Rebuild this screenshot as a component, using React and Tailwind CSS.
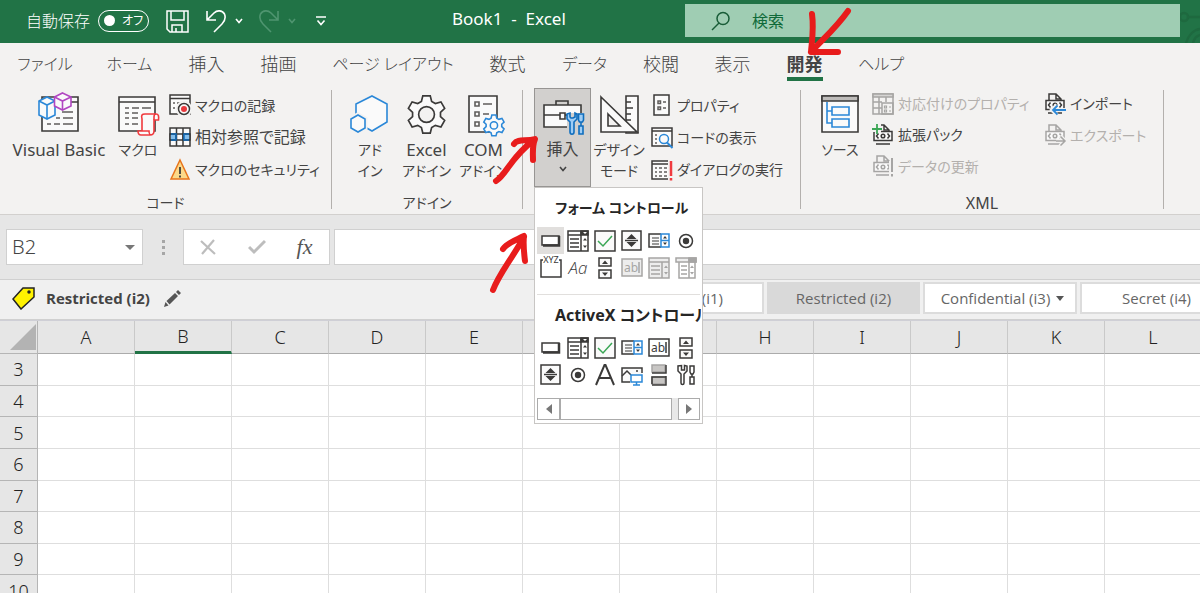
import React, { useState } from 'react';

const INK = '#3b3a39';
const BLUE = '#2b88d8';
const GREY = '#a6a5a4';
const PAPER = '#fafafa';

const tabs = [
  { name: 'ファイル', style: 'w-[86px] text-[16px]' },
  { name: 'ホーム', style: 'w-[83px] text-[16px]' },
  { name: '挿入', style: 'w-[71px] text-[18px]' },
  { name: '描画', style: 'w-[73px] text-[18px]' },
  { name: 'ページ レイアウト', style: 'w-[156px] text-[16px]' },
  { name: '数式', style: 'w-[73px] text-[18px]' },
  { name: 'データ', style: 'w-[81px] text-[16px]' },
  { name: '校閲', style: 'w-[72px] text-[18px]' },
  { name: '表示', style: 'w-[71px] text-[18px]' },
  { name: '開発', style: 'w-[73px] text-[18px]' },
  { name: 'ヘルプ', style: 'w-[80px] text-[16px]' },
];

const columns = ['A', 'B', 'C', 'D', 'E', 'F', 'G', 'H', 'I', 'J', 'K', 'L'];
const rows = [3, 4, 5, 6, 7, 8, 9, 10];

const Big = ({ children }) => (
  <svg className="h-[42px] w-[42px] overflow-visible" viewBox="0 0 42 42" fill="none" stroke={INK} strokeWidth="1.6">
    {children}
  </svg>
);

const Small = ({ children, color = INK }) => (
  <svg className="h-[22px] w-[22px] shrink-0 overflow-visible" viewBox="0 0 22 22" fill="none" stroke={color} strokeWidth="1.5">
    {children}
  </svg>
);

/* ---------- large ribbon icons ---------- */

const VisualBasicIcon = () => (
  <Big>
    <path d="M4 3H40V37H4Z" fill={PAPER} />
    <path d="M4 8H40" />
    <path d="M24 18h11M18 24h4M25 24h10M9 30h4M16 30h6M25 30h10" stroke="#605e5c" />
    <path d="M9 3 17 7V21L9 25 1 21V7Z" fill={PAPER} stroke={BLUE} />
    <path d="M1 7 9 11 17 7M9 11V25" stroke={BLUE} />
    <path d="M24.500-1 33 3V12L24.500 16 16.500 12V3Z" fill={PAPER} stroke="#b146c2" />
    <path d="M16.500 3 24.500 7 33 3M24.500 7V16" stroke="#b146c2" />
  </Big>
);

const MacroIcon = () => (
  <Big>
    <path d="M2 3H38V37H2Z" fill={PAPER} />
    <path d="M2 8H38" />
    <path d="M8 14h4M15 14h7M25 14h9M8 19h4M15 19h6M8 24h4M15 24h6M8 30h4M15 30h6" stroke="#605e5c" />
    <path d="M25 37V25C24 21 25 20 28 20H39C41.500 20 42 22 41.500 26H37V37C37 40 36 41 33 41H24C21 41 21 39 21 37H32C32 39 33 41 34 41" fill={PAPER} stroke="#f03a3e" />
    <path d="M37 26V23C37 21 38 20 39 20" stroke="#f03a3e" />
  </Big>
);

const AddInIcon = () => (
  <Big>
    <path d="M23 2 38 10V28L23 37 7 28V10Z" fill={PAPER} stroke={BLUE} />
    <path d="M9 21 16 25V34L9 38 2 34V25Z" fill={PAPER} stroke="#f3f2f1" strokeWidth="5" />
    <path d="M9 21 16 25V34L9 38 2 34V25Z" fill={PAPER} stroke={BLUE} />
  </Big>
);

const gearPath = 'M17 2h8l1.500 6 4 2.300 6-1.800 4 7-4.500 4.200v4.600l4.500 4.200-4 7-6-1.800-4 2.300-1.500 6h-8l-1.500-6-4-2.300-6 1.800-4-7 4.500-4.200v-4.600L1.500 15.500l4-7 6 1.800 4-2.300Z';

const GearIcon = () => (
  <Big>
    <g transform="translate(1 0) scale(.93)">
      <path d={gearPath} fill={PAPER} strokeWidth="1.800" />
      <circle cx="21" cy="22" r="8.500" fill="#f3f2f1" strokeWidth="1.800" />
    </g>
  </Big>
);

const ComAddInIcon = () => (
  <Big>
    <path d="M6 2H34V38H6Z" fill={PAPER} />
    <path d="M12 8h4v4h-4ZM12 18h4v4h-4ZM12 28h4v4h-4ZM20 10h9M20 20h6" stroke="#605e5c" />
    <g transform="translate(20 20) scale(.52)">
      <path d={gearPath} fill={PAPER} stroke={BLUE} strokeWidth="3" />
      <circle cx="21" cy="22" r="7" fill={PAPER} stroke={BLUE} strokeWidth="3" />
    </g>
  </Big>
);

const ToolboxIcon = () => (
  <Big>
    <path d="M14 11V7H26V11" />
    <path d="M2 11H39V33H2Z" fill={PAPER} />
    <path d="M2 21H18M23 21H39M18 19h5v6h-5Z" />
    <path d="M25 19h17v22H25Z" fill="#d2d0ce" stroke="none" />
    <path d="M25 20v5l3 3v10c0 3 4 3 4 0V28l3-3v-5l-2-1v4l-2 1h-2l-1-1v-4Z" fill="#9fcdf5" stroke="#106ebe" />
    <path d="M36.500 20h5v6l-1 2h-3l-1-2ZM39 28v4M37 32h4v8h-4Z" fill="#9fcdf5" stroke="#106ebe" />
  </Big>
);

const DesignModeIcon = () => (
  <Big>
    <path d="M28 2H40V39H28Z" fill={PAPER} />
    <path d="M28 8h5M28 14h7M28 20h5M28 26h5M28 32h5" />
    <path d="M3 3 39 38H3Z" fill={PAPER} />
    <path d="M10 20 22 32H10Z" fill="#f3f2f1" />
  </Big>
);

const SourceIcon = () => (
  <Big>
    <path d="M3 2H39V38H3Z" fill={PAPER} />
    <path d="M3 2H39V7H3Z" fill="#bebcba" />
    <path d="M8 8V29H13M8 17H13M13 13H30V21H13ZM13 25H30V33H13Z" stroke={BLUE} />
  </Big>
);

/* ---------- small ribbon icons ---------- */

const RecordIcon = () => (
  <Small>
    <path d="M1 1H21V20H1Z" fill={PAPER} />
    <path d="M1 4.500H21" />
    <path d="M4 9h2M8 9h4M4 14h2" stroke="#605e5c" />
    <circle cx="15" cy="15" r="7.500" fill={PAPER} stroke="#f3f2f1" />
    <circle cx="15" cy="15" r="5.500" fill={PAPER} />
    <circle cx="15" cy="15" r="3" fill="#e8383d" stroke="none" />
  </Small>
);

const RelativeIcon = () => (
  <Small>
    <path d="M1 2H21V20H1Z" fill={PAPER} />
    <path d="M1 8h6v6H1ZM14 8h7v6h-7Z" fill="#83beec" />
    <path d="M1 8H21M1 14H21M7.500 2V20M14 2V20" />
    <path d="M2 8H7v6H2M20 8H15v6h5" stroke="#106ebe" />
  </Small>
);

const SecurityIcon = () => (
  <Small>
    <path d="M11 1 20 20H2Z" fill="#fbd98a" stroke="#e8741b" />
    <path d="M11 8v7M11 16.500v2" stroke={INK} strokeWidth="1.800" />
  </Small>
);

const PropertyIcon = () => (
  <Small>
    <path d="M3 1H18V21H3Z" fill={PAPER} />
    <path d="M7 7h2.500v2.500H7ZM7 13h2.500v2.500H7ZM12 8h3M12 14h3" stroke="#605e5c" />
  </Small>
);

const ViewCodeIcon = () => (
  <Small>
    <path d="M1 2H21V20H1Z" fill={PAPER} />
    <path d="M1 5H21" />
    <path d="M4 9h2M4 13h2M4 17h2" stroke="#605e5c" />
    <circle cx="13" cy="13" r="4.500" fill={PAPER} stroke={BLUE} />
    <path d="M16 16.500 21.500 22" stroke={BLUE} strokeWidth="2" />
  </Small>
);

const RunDialogIcon = () => (
  <Small>
    <path d="M17 2H1V20H17" fill={PAPER} />
    <path d="M1 5H17" />
    <path d="M4 9h2M8 9h3M13 9h3M4 13h2M8 13h3M13 13h3M4 17h2M8 17h3M13 17h3" stroke="#605e5c" />
    <path d="M20 2V17M20 19V21.500" stroke="#f03a3e" strokeWidth="2.500" />
  </Small>
);

const MapPropertyIcon = () => (
  <Small color={GREY}>
    <path d="M1 1H21V21H1Z" fill="#f3f2f1" />
    <path d="M1 1H21V4H1Z" fill="#d5d4d3" />
    <path d="M1 9h9M1 15h9M7 4V21M14 4V9M10 10H21V21H10Z" />
    <path d="M12.500 13h2v2h-2ZM12.500 17h2v2h-2ZM17 14h2M17 18h2" strokeWidth="1.200" />
  </Small>
);

// shared <o> document used by the four XML commands
const XmlBody = () => (
  <>
    <path d="M5 7V1H12L17 6V7M12 1V6H17" />
    <path d="M20 16.500V7.500H2V16.500Z" fill={PAPER} />
    <path d="M6.500 9.500 4.500 12 6.500 14.500M15.500 9.500 17.500 12 15.500 14.500" />
    <circle cx="11" cy="12" r="1.800" />
    <path d="M4 20H18" />
  </>
);

const ExpansionIcon = () => (
  <Small>
    <XmlBody />
    <path d="M0-1H9V9H3V8H0Z" fill="#f3f2f1" stroke="none" />
    <path d="M5 0V10M0 5H10" stroke="#3aa655" strokeWidth="1.800" />
  </Small>
);

const RefreshIcon = () => (
  <Small color={GREY}>
    <XmlBody />
    <path d="M17 6h6v16h-6Z" fill="#f3f2f1" stroke="none" />
    <path d="M20 3V17M20 19V21.500" strokeWidth="2" />
  </Small>
);

const ImportIcon = () => (
  <Small>
    <XmlBody />
    <path d="M8 17H22M13 12 8 17 13 22" stroke="#f3f2f1" strokeWidth="4" />
    <path d="M9 17H22M13.500 12.500 9 17 13.500 21.500" stroke={BLUE} strokeWidth="1.800" />
  </Small>
);

const ExportIcon = () => (
  <Small color={GREY}>
    <XmlBody />
    <path d="M12 17H21M16 12 21 17 16 22" stroke="#f3f2f1" strokeWidth="4" />
    <path d="M12 17H21M16.500 12.500 21 17 16.500 21.500" />
  </Small>
);

/* ---------- form control icons ---------- */

const ButtonCtl = () => (
  <Small>
    <path d="M2 6H19V15H2Z" fill="#fff" />
    <path d="M19 6V15.500H3" strokeWidth="2.500" />
  </Small>
);

const ComboCtl = () => (
  <Small>
    <path d="M1 1H21V21H1Z" fill="#fff" />
    <path d="M1 5H14M14 1V21M3 9h9M3 13h9M3 17h9" />
    <path d="M14 1H21V5H14Z" fill={INK} />
    <path d="M16 2h4l-2 2Z" fill="#fff" stroke="none" />
    <path d="M16 10.500h4l-2-2.500ZM16 15.500h4l-2 2.500Z" fill={INK} stroke="none" />
  </Small>
);

const CheckCtl = () => (
  <Small>
    <path d="M1 1H21V21H1Z" fill={PAPER} />
    <path d="M4 11 9 16 18 6" stroke="#3aa655" />
  </Small>
);

const SpinCtl = () => (
  <Small>
    <path d="M1 1H20V20H1Z" fill={PAPER} />
    <path d="M4 10.500H17" />
    <path d="M5.500 9h10L10.500 4ZM5.500 12h10L10.500 17Z" fill={INK} stroke="none" />
  </Small>
);

const ListCtl = () => (
  <Small>
    <path d="M13 4H1V17H13" fill={PAPER} />
    <path d="M4 8h7M4 11h7M4 14h7" strokeWidth="1.200" />
    <path d="M13 4H21V17H13ZM13 10.500H21" fill="#fff" stroke={BLUE} />
    <path d="M15 8.500h4l-2-2.500ZM15 12.500h4l-2 2.500Z" fill={INK} stroke="none" />
  </Small>
);

const RadioCtl = () => (
  <Small>
    <circle cx="11" cy="11" r="6.500" fill="#fff" />
    <circle cx="11" cy="11" r="3.200" fill={INK} stroke="none" />
  </Small>
);

const GroupCtl = () => (
  <Small>
    <path d="M3 3H1V20H21V3H19" />
    <text x="11" y="6" fill={INK} stroke="none" fontSize="9" textAnchor="middle" fontFamily="Noto Sans, sans-serif">XYZ</text>
  </Small>
);

const LabelCtl = () => (
  <Small>
    <text x="11" y="17" fill={INK} stroke="none" fontSize="17" fontStyle="italic" fontWeight="300" textAnchor="middle" fontFamily="Open Sans, Noto Sans, sans-serif">Aa</text>
  </Small>
);

const ScrollCtl = () => (
  <Small>
    <path d="M5 1H17V9H5ZM5 13H17V21H5Z" fill={PAPER} />
    <path d="M8 7h6L11 3.500ZM8 15.500h6L11 19Z" fill={INK} stroke="none" />
  </Small>
);

const TextCtl = ({ color = INK }) => (
  <Small color={color}>
    <path d="M1 2H21V19H1Z" fill={color === INK ? '#fff' : '#ededed'} />
    <text x="10" y="15" fill={color} stroke="none" fontSize="12" textAnchor="middle" fontFamily="Noto Sans, sans-serif">ab</text>
    <path d="M18 5V16" />
  </Small>
);

const ComboListOff = () => (
  <Small color={GREY}>
    <path d="M1 1H21V21H1Z" fill="#ededed" />
    <path d="M1 5H21M14 5V21M3 9h9M3 13h9M3 17h9" />
    <path d="M16 11h4l-2-2.500ZM16 15h4l-2 2.500Z" fill={GREY} stroke="none" />
  </Small>
);

const ComboDropOff = () => (
  <Small color={GREY}>
    <path d="M1 1H21V5H1Z" fill="#ededed" />
    <path d="M4 5V21H20V5M14 1V21M6 9h6M6 13h6M6 17h6" fill="none" />
    <path d="M14 1h7v4h-7Z" fill={GREY} />
    <path d="M15 11h4l-2-2.500ZM15 15h4l-2 2.500Z" fill={GREY} stroke="none" />
  </Small>
);

const LabelACtl = () => (
  <Small>
    <path d="M2 21 10.500 1H11.500L20 21M5 14H17" strokeWidth="2" />
  </Small>
);

const ImageCtl = () => (
  <Small>
    <path d="M9 18H1V4H21V9" fill={PAPER} />
    <path d="M1 12 6 7 10 11" />
    <circle cx="16" cy="7" r="1" fill={INK} stroke="none" />
    <path d="M10 11H21V18H10ZM15.500 18V21M12 21H19" fill="#fff" stroke={BLUE} />
  </Small>
);

const ToggleCtl = () => (
  <Small>
    <path d="M4 1H17V8H4ZM4 13H17V20H4Z" fill="#c8c6c4" stroke={GREY} />
    <path d="M18 1V9H4M4 20V13H18M18 12V21H4" />
  </Small>
);

const ToolsCtl = () => (
  <Small>
    <path d="M3 2v5l3 3v9c0 2 3 2 3 0v-9l3-3V2L9.500 1.500V6h-3V1.500Z" />
    <path d="M15 2h4v6l-1 2h-2l-1-2ZM17 10v3M15 13h4v7h-4Z" />
  </Small>
);

const formControls = [
  { name: 'ボタン', Icon: ButtonCtl },
  { name: 'コンボ ボックス', Icon: ComboCtl },
  { name: 'チェック ボックス', Icon: CheckCtl },
  { name: 'スピン ボタン', Icon: SpinCtl },
  { name: 'リスト ボックス', Icon: ListCtl },
  { name: 'オプション ボタン', Icon: RadioCtl },
  { name: 'グループ ボックス', Icon: GroupCtl },
  { name: 'ラベル', Icon: LabelCtl },
  { name: 'スクロール バー', Icon: ScrollCtl },
  { name: 'テキスト フィールド', Icon: () => <TextCtl color={GREY} />, disabled: true },
  { name: 'コンボ ボックス - リスト', Icon: ComboListOff, disabled: true },
  { name: 'コンボ ボックス - ドロップダウン', Icon: ComboDropOff, disabled: true },
];

const activeXControls = [
  { name: 'コマンド ボタン', Icon: ButtonCtl },
  { name: 'コンボ ボックス', Icon: ComboCtl },
  { name: 'チェック ボックス', Icon: CheckCtl },
  { name: 'リスト ボックス', Icon: ListCtl },
  { name: 'テキスト ボックス', Icon: TextCtl },
  { name: 'スクロール バー', Icon: ScrollCtl },
  { name: 'スピン ボタン', Icon: SpinCtl },
  { name: 'オプション ボタン', Icon: RadioCtl },
  { name: 'ラベル', Icon: LabelACtl },
  { name: 'イメージ', Icon: ImageCtl },
  { name: 'トグル ボタン', Icon: ToggleCtl },
  { name: 'コントロールの選択', Icon: ToolsCtl },
];

const ControlGrid = ({ items, selected }) => (
  <div className="grid grid-cols-[repeat(6,27px)] pl-[2px]">
    {items.map(({ name, Icon, disabled }, index) => (
      <button
        key={name}
        aria-label={name}
        disabled={disabled}
        className={`flex h-[27px] w-[27px] items-center justify-center ${index === selected ? 'bg-[#e1dfdd]' : ''}`}
      >
        <Icon />
      </button>
    ))}
  </div>
);

const InsertMenu = () => (
  <div className="absolute left-0 top-full z-10 flex w-[169px] flex-col overflow-hidden border border-[#c8c6c4] bg-white pb-[3px] text-left text-[#262626]">
    <h2 className="h-[39px] whitespace-nowrap pl-[20px] text-[14px] font-bold leading-[40px]">フォーム コントロール</h2>
    <ControlGrid items={formControls} selected={0} />
    <hr className="mx-[2px] mt-[13px] border-[#e1dfdd]" />
    <h2 className="h-[39px] w-[166px] overflow-hidden whitespace-nowrap pl-[20px] text-[16px] font-bold leading-[40px]">ActiveX コントロール</h2>
    <ControlGrid items={activeXControls} />
    <div className="mx-[2px] mt-[10px] flex h-[22px] bg-[#e8e8e8]">
      <button aria-label="左へ" className="flex w-[23px] items-center justify-center border border-[#ababab] bg-white">
        <span className="border-y-[5px] border-r-[6px] border-y-transparent border-r-[#777]" />
      </button>
      <div className="mr-[6px] flex-1 border border-[#ababab] bg-white" />
      <button aria-label="右へ" className="flex w-[22px] items-center justify-center border border-[#ababab] bg-white">
        <span className="border-y-[5px] border-l-[6px] border-y-transparent border-l-[#777]" />
      </button>
    </div>
  </div>
);

const BigButton = ({ icon, lines, width }) => (
  <button className={`flex shrink-0 flex-col items-center pt-[7px] ${width}`}>
    {icon}
    <span className="mt-[3px] flex flex-col items-center whitespace-nowrap leading-[21px]">
      {lines.map((line) => (
        <span key={line} className={/^[A-Z]/.test(line) ? 'text-[17px]' : 'text-[14px]'}>{line}</span>
      ))}
    </span>
  </button>
);

const SmallButton = ({ icon, label, disabled, size = 'text-[14px]' }) => (
  <button disabled={disabled} className={`flex flex-1 items-center gap-[4px] whitespace-nowrap ${size} ${disabled ? 'text-[#b3b0ad]' : ''}`}>
    {icon}
    {label}
  </button>
);

const Group = ({ label, width, children }) => (
  <div className={`flex shrink-0 flex-col ${width}`}>
    <div className="flex h-[106px] items-start">{children}</div>
    <div className="text-center text-[14px] leading-[20px]">{label}</div>
  </div>
);

const Divider = () => <div className="mt-[3px] h-[119px] w-px shrink-0 bg-[#b3b0ad]" />;

const Chevron = ({ color = '#fff' }) => (
  <svg className="h-[6px] w-[8px]" viewBox="0 0 8 6" fill="none" stroke={color} strokeWidth="1.600">
    <path d="M1 1 4 4.500 7 1" />
  </svg>
);

const TitleBar = () => (
  <header className="relative flex h-[43px] shrink-0 items-center overflow-hidden bg-[#217346] text-[16px] text-white">
    <div className="flex h-full w-[452px] shrink-0 items-center pl-[26px] pb-[2px]">
      <label htmlFor="autosave" className="font-light">自動保存</label>
      <button id="autosave" role="switch" aria-checked="false" className="ml-[8px] flex h-[22px] w-[51px] items-center rounded-full border border-white pl-[5px]">
        <span className="h-[11px] w-[11px] rounded-full bg-white" />
        <span className="ml-[7px] text-[12px]">オフ</span>
      </button>
      <button aria-label="保存" className="ml-[17px]">
        <svg className="h-[24px] w-[24px]" viewBox="0 0 24 24" fill="none" stroke="#fff" strokeWidth="1.500">
          <path d="M1 2H22V23H4L1 20ZM5 2V11H18V2M6 23V16H16V23M10 23V19" />
        </svg>
      </button>
      <button aria-label="元に戻す" className="ml-[15px]">
        <svg className="h-[24px] w-[22px]" viewBox="0 0 22 24" fill="none" stroke="#fff" strokeWidth="1.600">
          <path d="M2 2V11H11M2 11 9 4C12 1 17 1 19.500 5C21 9 20 12 17 15L9 23" />
        </svg>
      </button>
      <button aria-label="元に戻すの一覧" className="ml-[8px]"><Chevron /></button>
      <button aria-label="やり直し" className="ml-[15px]">
        <svg className="h-[24px] w-[22px]" viewBox="0 0 22 24" fill="none" stroke="#4f9570" strokeWidth="1.600">
          <path d="M20 2V11H11M20 11 13 4C10 1 5 1 2.500 5C1 9 2 12 5 15L13 23" />
        </svg>
      </button>
      <button aria-label="やり直しの一覧" className="ml-[8px]"><Chevron color="#4f9570" /></button>
      <button aria-label="クイック アクセス ツール バーのカスタマイズ" className="ml-[20px]">
        <svg className="h-[10px] w-[10px]" viewBox="0 0 10 10" fill="none" stroke="#fff" strokeWidth="1.600">
          <path d="M0 1H10M1.500 4.500 5 8.500 8.500 4.500" />
        </svg>
      </button>
    </div>
    <h1 className="w-[233px] shrink-0 whitespace-pre pb-[5px] text-[17px]">Book1  -  Excel</h1>
    <div className="mr-[20px] mb-[2px] flex h-[33px] flex-1 items-center bg-[#9fcdb3] pl-[26px] text-[#0f6a39]">
      <svg className="h-[20px] w-[20px] shrink-0" viewBox="0 0 20 20" fill="none" stroke="#185c37" strokeWidth="1.500">
        <circle cx="12" cy="7.500" r="6" />
        <path d="M8 12 1 19" />
      </svg>
      <input aria-label="検索" placeholder="検索" className="ml-[21px] w-full bg-transparent text-[16px] outline-none placeholder:text-[#0f6a39]" />
    </div>
    <svg className="absolute right-0 top-0 h-[43px] w-[20px]" viewBox="0 0 20 43" fill="none" stroke="#1e693f" strokeWidth="2.500">
      <circle cx="4" cy="17" r="4" />
      <path d="M8 17H20M6 43C8 36 13 30 20 29M13 43C14 39 16 36 20 35" />
    </svg>
  </header>
);

const Ribbon = () => {
  const [menuOpen, setMenuOpen] = useState(true);

  return (
    <div className="flex h-[128px] shrink-0 border-b border-[#d2d0ce] bg-[#f3f2f1] text-[#444]">
      <Group label="コード" width="w-[331px]">
        <BigButton icon={<VisualBasicIcon />} lines={['Visual Basic']} width="ml-[7px] w-[104px]" />
        <BigButton icon={<MacroIcon />} lines={['マクロ']} width="w-[54px]" />
        <div className="ml-[4px] mt-[2px] flex h-[97px] flex-col items-start">
          <SmallButton icon={<RecordIcon />} label="マクロの記録" />
          <SmallButton icon={<RelativeIcon />} label="相対参照で記録" size="text-[16px]" />
          <SmallButton icon={<SecurityIcon />} label="マクロのセキュリティ" />
        </div>
      </Group>
      <Divider />
      <Group label="アドイン" width="w-[190px]">
        <BigButton icon={<AddInIcon />} lines={['アド', 'イン']} width="ml-[10px] w-[56px]" />
        <BigButton icon={<GearIcon />} lines={['Excel', 'アドイン']} width="w-[57px]" />
        <BigButton icon={<ComAddInIcon />} lines={['COM', 'アドイン']} width="w-[57px]" />
      </Group>
      <Divider />
      <Group label="" width="w-[277px]">
        <div className="relative ml-[11px] mt-px h-[99px] w-[57px] shrink-0">
          <button
            onClick={() => setMenuOpen(!menuOpen)}
            aria-expanded={menuOpen}
            className="flex h-full w-full flex-col items-center border border-[#979593] bg-[#d2d0ce] pt-[5px] text-[16px]"
          >
            <ToolboxIcon />
            <span className="mt-[3px] leading-[21px]">挿入</span>
            <span className="mt-[6px]"><Chevron color="#444" /></span>
          </button>
          {menuOpen && <InsertMenu />}
        </div>
        <BigButton icon={<DesignModeIcon />} lines={['デザイン', 'モード']} width="w-[56px]" />
        <div className="ml-[4px] mt-[2px] flex h-[97px] flex-col items-start">
          <SmallButton icon={<PropertyIcon />} label="プロパティ" />
          <SmallButton icon={<ViewCodeIcon />} label="コードの表示" />
          <SmallButton icon={<RunDialogIcon />} label="ダイアログの実行" />
        </div>
      </Group>
      <Divider />
      <Group label={<span className="text-[16px]">XML</span>} width="w-[362px]">
        <BigButton icon={<SourceIcon />} lines={['ソース']} width="ml-[11px] w-[56px]" />
        <div className="ml-[4px] mt-px flex h-[94px] w-[172px] flex-col items-start">
          <SmallButton icon={<MapPropertyIcon />} label="対応付けのプロパティ" disabled />
          <SmallButton icon={<ExpansionIcon />} label="拡張パック" />
          <SmallButton icon={<RefreshIcon />} label="データの更新" disabled />
        </div>
        <div className="mt-px flex h-[63px] flex-col items-start">
          <SmallButton icon={<ImportIcon />} label="インポート" />
          <SmallButton icon={<ExportIcon />} label="エクスポート" disabled />
        </div>
      </Group>
      <Divider />
    </div>
  );
};

const FormulaBar = () => (
  <div className="flex h-[64px] shrink-0 items-center bg-[#e6e6e6]">
    <div className="ml-[6px] flex h-[36px] w-[137px] shrink-0 items-center border border-[#d0d0d0] bg-white pr-[7px]">
      <input aria-label="名前ボックス" defaultValue="B2" className="w-full min-w-0 bg-transparent pl-[5px] text-[20px] font-light text-[#444] outline-none" />
      <span className="border-x-[5px] border-t-[5px] border-x-transparent border-t-[#777]" />
    </div>
    <div className="ml-[19px] flex flex-col gap-[3px]">
      <span className="h-[3px] w-[3px] bg-[#a6a6a6]" />
      <span className="h-[3px] w-[3px] bg-[#a6a6a6]" />
      <span className="h-[3px] w-[3px] bg-[#a6a6a6]" />
    </div>
    <div className="ml-[18px] flex h-[36px] w-[147px] shrink-0 items-center border border-[#d0d0d0] bg-white">
      <button aria-label="キャンセル" className="flex w-[48px] justify-center">
        <svg className="h-[16px] w-[16px]" viewBox="0 0 16 16" fill="none" stroke="#bdbdbd" strokeWidth="2.200">
          <path d="M1 2 15 15M14 1 2 15" />
        </svg>
      </button>
      <button aria-label="入力" className="flex w-[49px] justify-center">
        <svg className="h-[16px] w-[18px]" viewBox="0 0 18 16" fill="none" stroke="#bdbdbd" strokeWidth="3">
          <path d="M1 8 6 13 17 2" />
        </svg>
      </button>
      <button aria-label="関数の挿入" className="w-[47px] text-center font-['Liberation_Serif',serif] text-[22px] italic leading-[24px] text-[#555]">fx</button>
    </div>
    <input aria-label="数式バー" className="ml-[4px] h-[36px] min-w-0 flex-1 border border-r-0 border-[#d0d0d0] bg-white outline-none" />
  </div>
);

const LabelBar = () => (
  <div className="flex h-[41px] shrink-0 items-center border-y border-[#d0d0d0] bg-[#f0f0f0] pb-[3px] font-['Open_Sans',sans-serif] text-[15px] text-[#666]">
    <div className="flex w-[611px] shrink-0 items-center">
      <svg className="ml-[12px] h-[23px] w-[23px]" viewBox="0 0 23 23" stroke="#222" strokeWidth="1.500">
        <path d="M11 1H22V10L9 22 1 12Z" fill="#fff200" />
        <circle cx="17" cy="5" r="1" fill="#222" />
      </svg>
      <strong className="ml-[11px] font-bold text-[#444]">Restricted (i2)</strong>
      <button aria-label="ラベルの編集" className="ml-[14px]">
        <svg className="h-[17px] w-[17px]" viewBox="0 0 17 17" fill="#555">
          <path d="M0 17 1.500 12 4.500 15.500ZM2.500 11 11 3 14 6 5.500 14.500ZM12 2 14 0 17 3 15 5Z" />
        </svg>
      </button>
    </div>
    <div className="flex shrink-0 gap-[3px]">
      <button className="h-[32px] w-[153px] border-2 border-[#dcdcdc] bg-white pr-[39px] text-right">(i1)</button>
      <button className="h-[32px] w-[153px] bg-[#d9d9d9]">Restricted (i2)</button>
      <button className="flex h-[32px] w-[154px] items-center justify-center gap-[6px] border-2 border-[#dcdcdc] bg-white pl-[5px]">
        Confidential (i3)
        <span className="border-x-[4px] border-t-[5px] border-x-transparent border-t-[#555]" />
      </button>
      <button className="h-[32px] w-[153px] border-2 border-[#dcdcdc] bg-white">Secret (i4)</button>
    </div>
  </div>
);

const Sheet = () => (
  <div className="min-h-0 flex-1 overflow-hidden border-t border-[#cfcfd6] bg-white">
    <table className="h-[286px] w-[1202px] table-fixed border-separate border-spacing-0 text-[18px] font-light leading-[24px] text-[#222]">
      <thead>
        <tr className="h-[33px] bg-[#e6e6e6]">
          <th aria-label="すべて選択" className="w-[38px] border-b border-r border-[#b5b5b5] p-0">
            <svg className="ml-[9px] h-[28px] w-[28px]" viewBox="0 0 28 28">
              <path d="M27 1V27H1Z" fill="#b3b3b3" />
            </svg>
          </th>
          {columns.map((column) => (
            <th
              key={column}
              className={`w-[97px] border-r border-r-[#c9c9c9] p-0 font-light ${column === 'B' ? 'border-b-[3px] border-b-[#217346]' : 'border-b border-b-[#ababab]'}`}
            >
              {column}
            </th>
          ))}
        </tr>
      </thead>
      <tbody>
        {rows.map((row) => (
          <tr key={row}>
            <th className="border-b border-r border-[#b5b5b5] bg-[#e6e6e6] p-0 font-light">{row}</th>
            {columns.map((column) => (
              <td key={column} className="border-b border-r border-[#dedede] p-0" />
            ))}
          </tr>
        ))}
      </tbody>
    </table>
  </div>
);

const Arrows = () => (
  <svg className="pointer-events-none absolute left-0 top-0 z-20 h-[593px] w-[1200px]" viewBox="0 0 1200 593" fill="none" stroke="#e81c1c" strokeWidth="6" strokeLinecap="round" strokeLinejoin="round">
    <path d="M848 11C836 28 824 38 811 52M812 14C814 28 812 40 811 52H838" />
    <path d="M496 181C507 174 510 158 534 140M514 144C518 138 526 142 535 139C532 146 533 154 533 160" />
    <path d="M493 290C499 274 511 260 524 237M503 249C508 242 516 240 524 236C523 244 524 253 525 261" />
  </svg>
);

const App = () => {
  const [activeTab, setActiveTab] = useState('開発');

  return (
    <div className="relative flex h-screen flex-col overflow-hidden font-['Noto_Sans','Noto_Sans_CJK_JP',sans-serif] [font-feature-settings:'palt']">
      <TitleBar />
      <nav className="flex h-[44px] shrink-0 bg-[#f3f2f1] pl-[2px] text-[#444]">
        {tabs.map((tab) => (
          <button
            key={tab.name}
            onClick={() => setActiveTab(tab.name)}
            className={`flex h-[38px] shrink-0 justify-center whitespace-nowrap ${tab.style} ${activeTab === tab.name ? 'font-bold' : 'font-light'}`}
          >
            <span className={`h-full leading-[42px] ${activeTab === tab.name ? 'border-b-4 border-[#217346]' : ''}`}>{tab.name}</span>
          </button>
        ))}
      </nav>
      <Ribbon />
      <FormulaBar />
      <LabelBar />
      <Sheet />
      <Arrows />
    </div>
  );
};

export default App;
